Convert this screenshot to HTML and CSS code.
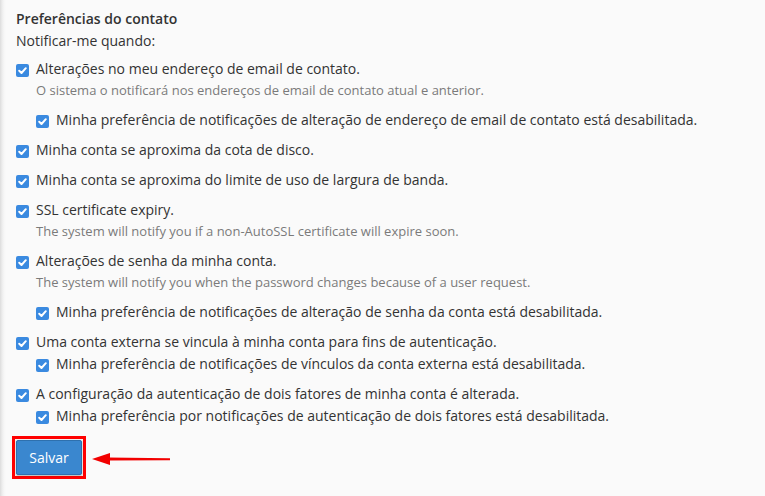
FILE: index.html
```html
<!DOCTYPE html>
<html lang="pt-BR">
<head>
    <meta charset="UTF-8">
    <title>Preferências do contato</title>
    <link rel="stylesheet" href="styles.css">
</head>
<body>
    <div class="page">
        <h4 class="section-title">Preferências do contato</h4>
        <p class="lead">Notificar-me quando:</p>

        <div class="option">
            <label class="check"><span class="box"><svg viewBox="0 0 13 13"><path d="M3.2 6.8 L5.5 9 L9.8 4.2"/></svg></span>Alterações no meu endereço de email de contato.</label>
            <p class="help">O sistema o notificará nos endereços de email de contato atual e anterior.</p>
            <label class="check sub after-help"><span class="box"><svg viewBox="0 0 13 13"><path d="M3.2 6.8 L5.5 9 L9.8 4.2"/></svg></span>Minha preferência de notificações de alteração de endereço de email de contato está desabilitada.</label>
        </div>

        <div class="option">
            <label class="check"><span class="box"><svg viewBox="0 0 13 13"><path d="M3.2 6.8 L5.5 9 L9.8 4.2"/></svg></span>Minha conta se aproxima da cota de disco.</label>
        </div>

        <div class="option">
            <label class="check"><span class="box"><svg viewBox="0 0 13 13"><path d="M3.2 6.8 L5.5 9 L9.8 4.2"/></svg></span>Minha conta se aproxima do limite de uso de largura de banda.</label>
        </div>

        <div class="option">
            <label class="check"><span class="box"><svg viewBox="0 0 13 13"><path d="M3.2 6.8 L5.5 9 L9.8 4.2"/></svg></span>SSL certificate expiry.</label>
            <p class="help">The system will notify you if a non-AutoSSL certificate will expire soon.</p>
        </div>

        <div class="option">
            <label class="check"><span class="box"><svg viewBox="0 0 13 13"><path d="M3.2 6.8 L5.5 9 L9.8 4.2"/></svg></span>Alterações de senha da minha conta.</label>
            <p class="help">The system will notify you when the password changes because of a user request.</p>
            <label class="check sub after-help"><span class="box"><svg viewBox="0 0 13 13"><path d="M3.2 6.8 L5.5 9 L9.8 4.2"/></svg></span>Minha preferência de notificações de alteração de senha da conta está desabilitada.</label>
        </div>

        <div class="option">
            <label class="check"><span class="box"><svg viewBox="0 0 13 13"><path d="M3.2 6.8 L5.5 9 L9.8 4.2"/></svg></span>Uma conta externa se vincula à minha conta para fins de autenticação.</label>
            <label class="check sub"><span class="box"><svg viewBox="0 0 13 13"><path d="M3.2 6.8 L5.5 9 L9.8 4.2"/></svg></span>Minha preferência de notificações de vínculos da conta externa está desabilitada.</label>
        </div>

        <div class="option">
            <label class="check"><span class="box"><svg viewBox="0 0 13 13"><path d="M3.2 6.8 L5.5 9 L9.8 4.2"/></svg></span>A configuração da autenticação de dois fatores de minha conta é alterada.</label>
            <label class="check sub"><span class="box"><svg viewBox="0 0 13 13"><path d="M3.2 6.8 L5.5 9 L9.8 4.2"/></svg></span>Minha preferência por notificações de autenticação de dois fatores está desabilitada.</label>
        </div>

        <!-- Save button, highlighted with a red frame and arrow -->
        <div class="actions">
            <span class="highlight"><button class="btn-save" type="button">Salvar</button></span>
            <svg class="arrow" width="80" height="14" viewBox="0 0 80 14">
                <path d="M0 7 L18 1 L18 13 Z" fill="#f20000"/>
                <path d="M16 5.6 L78 6.2 L78 8.2 L16 8.6 Z" fill="#f20000"/>
            </svg>
        </div>
    </div>
</body>
</html>
```

FILE: styles.css
```css
html, body {
    margin: 0;
    padding: 0;
    height: 100%;
}

body {
    background-color: #fafafa;
    font-family: "Open Sans", "Liberation Sans", sans-serif;
    font-size: 14px;
    line-height: 20px;
    color: #333;
    overflow: hidden;
}

/* Page body, with the soft edge of the side menu on the left */
.page {
    min-height: 100%;
    box-sizing: border-box;
    padding: 9px 16px 0 16px;
    background: linear-gradient(to right, #dcdcdc 0, #ececec 2px, #f6f6f6 4px, #fafafa 6px);
}

.section-title {
    margin: 0;
    font-size: 14px;
    font-weight: 600;
    line-height: 20px;
}

.lead {
    margin: 2px 0 -2px 0;
}

.option {
    margin-top: 10px;
    display: flex;
    flex-direction: column;
}

.check {
    display: flex;
    align-items: flex-start;
    cursor: pointer;
}

.check .box {
    flex: none;
    width: 13px;
    height: 13px;
    margin: 5px 7px 0 0;
    border-radius: 2px;
    background-color: #3a8ae0;
    display: flex;
}

.check .box svg {
    width: 13px;
    height: 13px;
}

.check .box path {
    fill: none;
    stroke: #fff;
    stroke-width: 2;
    stroke-linecap: round;
    stroke-linejoin: round;
}

/* Nested preference under an option */
.check.sub {
    margin-left: 20px;
    margin-top: 2px;
}

.check.sub.after-help {
    margin-top: 10px;
}

.help {
    margin: 1px 0 0 20px;
    font-size: 13px;
    line-height: 20px;
    color: #7a7a7a;
}

.actions {
    display: flex;
    align-items: center;
    margin: 10px 0 0 -4px;
}

.highlight {
    display: inline-flex;
    border: 3px solid #f00;
    padding: 1px;
    background-color: #f2f2f2;
}

.btn-save {
    font-family: "Open Sans", "Liberation Sans", sans-serif;
    font-size: 14px;
    line-height: 20px;
    color: #fff;
    background-color: #3a87cf;
    border: 1px solid #2e70ae;
    border-radius: 2px;
    padding: 6px 12px;
    width: 66px;
    height: 35px;
    box-shadow: 0 1px 2px rgba(0, 0, 0, 0.25);
    cursor: pointer;
}

.arrow {
    margin-left: 6px;
    margin-top: 2px;
}
```
